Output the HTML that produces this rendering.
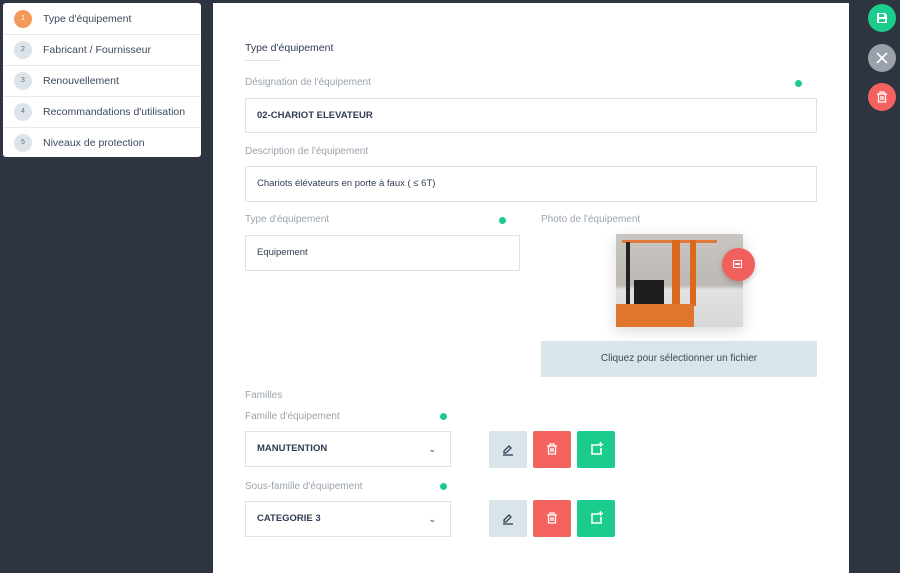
<!DOCTYPE html>
<html><head><meta charset="utf-8"><style>
body{margin:0;width:900px;height:569px;background:#2d3541;font-family:"Liberation Sans",sans-serif;position:relative;overflow:hidden}
.a{position:absolute}
.side{left:3px;top:3px;width:198px;height:154px;background:#fff;border-radius:3px}
.it{position:absolute;left:0;width:198px;height:31px;border-bottom:1px solid #e8ebee;font-size:10.5px;color:#3b4a5e}
.it span.n{position:absolute;left:11px;top:7px;width:18px;height:18px;border-radius:50%;background:#dde4e9;color:#5d6b7a;font-size:7px;text-align:center;line-height:18px}
.it span.t{position:absolute;left:40px;top:10px}
.main{left:213px;top:3px;width:636px;height:570px;background:#fff}
.lbl{font-size:10px;color:#9aa3ad}
.inp{border:1px solid #dde2e6;background:#fff;font-size:9.5px;color:#2f3d52;box-sizing:border-box;padding-left:11px}
.dot{width:7px;height:7px;border-radius:50%;background:#1ccc8d}
.btn{width:38px;height:37px;border-radius:2px}
.c{width:28px;height:28px;border-radius:50%;left:868px}
</style></head><body>
<div class="a side">
<div class="it" style="top:0"><span class="n" style="background:#f39a5a;color:#fff">1</span><span class="t">Type d'équipement</span></div>
<div class="it" style="top:31px"><span class="n">2</span><span class="t">Fabricant / Fournisseur</span></div>
<div class="it" style="top:62px"><span class="n">3</span><span class="t">Renouvellement</span></div>
<div class="it" style="top:93px"><span class="n">4</span><span class="t">Recommandations d'utilisation</span></div>
<div class="it" style="top:124px;border:none"><span class="n">5</span><span class="t">Niveaux de protection</span></div>
</div>
<div class="a main"></div>
<div class="a" style="left:245px;top:42px;font-size:10.5px;color:#2f3d52">Type d'équipement</div>
<div class="a" style="left:245px;top:60px;width:36px;height:1px;background:#dde2e6"></div>
<div class="a lbl" style="left:245px;top:77px">Désignation de l'équipement</div>
<div class="a dot" style="left:795px;top:80px"></div>
<div class="a inp" style="left:245px;top:98px;width:572px;height:35px;line-height:33px;font-weight:bold">02-CHARIOT ELEVATEUR</div>
<div class="a lbl" style="left:245px;top:146px">Description de l'équipement</div>
<div class="a inp" style="left:245px;top:166px;width:572px;height:36px;line-height:34px">Chariots élévateurs en porte à faux ( ≤ 6T)</div>
<div class="a lbl" style="left:245px;top:214px">Type d'équipement</div>
<div class="a dot" style="left:499px;top:217px"></div>
<div class="a inp" style="left:245px;top:235px;width:275px;height:36px;line-height:34px">Equipement</div>
<div class="a lbl" style="left:541px;top:214px">Photo de l'équipement</div>
<div class="a" style="left:616px;top:234px;width:127px;height:93px;background:linear-gradient(#c9c6c2 0,#bdb8b3 55%,#e2e2e2 60%,#d8d8d8 100%);box-shadow:0 4px 14px rgba(0,0,0,.15)">
<div class="a" style="left:6px;top:6px;width:95px;height:3px;background:#e07a3c"></div>
<div class="a" style="left:10px;top:8px;width:4px;height:62px;background:#222"></div>
<div class="a" style="left:56px;top:6px;width:8px;height:66px;background:#d8691f"></div>
<div class="a" style="left:74px;top:6px;width:6px;height:66px;background:#d8691f"></div>
<div class="a" style="left:18px;top:46px;width:30px;height:24px;background:#1e1e1e"></div>
<div class="a" style="left:0;top:70px;width:78px;height:23px;background:#e0762e"></div>
</div>
<div class="a" style="left:722px;top:248px;width:33px;height:33px;border-radius:50%;background:#f2605d;box-shadow:0 2px 6px rgba(0,0,0,.2)"><div class="a" style="left:11px;top:12px;width:9px;height:8px;border:1.5px solid #fff;box-sizing:border-box"></div><div class="a" style="left:13px;top:15px;width:5px;height:1.5px;background:#fff"></div></div>
<div class="a" style="left:541px;top:341px;width:276px;height:36px;background:#d9e5e8;font-size:10px;color:#3b4a5e;text-align:center;line-height:36px">Cliquez pour sélectionner un fichier</div>
<div class="a lbl" style="left:245px;top:390px">Familles</div>
<div class="a lbl" style="left:245px;top:411px">Famille d'équipement</div>
<div class="a dot" style="left:440px;top:413px"></div>
<div class="a inp" style="left:245px;top:431px;width:206px;height:36px;line-height:34px;font-weight:bold">MANUTENTION<span style="position:absolute;right:14px;font-weight:normal;font-size:9px">⌄</span></div>
<div class="a lbl" style="left:245px;top:481px">Sous-famille d'équipement</div>
<div class="a dot" style="left:440px;top:483px"></div>
<div class="a inp" style="left:245px;top:501px;width:206px;height:36px;line-height:34px;font-weight:bold">CATEGORIE 3<span style="position:absolute;right:14px;font-weight:normal;font-size:9px">⌄</span></div>
<div class="a btn" style="left:489px;top:431px;background:#dae5e9"><svg class="a" style="left:12px;top:11px" width="14" height="14" viewBox="0 0 14 14"><path d="M3 9L8 4l2 2-5 5H3z" fill="none" stroke="#2f3d52" stroke-width="1.3"/><path d="M2 13h10" stroke="#2f3d52" stroke-width="1.3"/></svg></div>
<div class="a btn" style="left:533px;top:431px;background:#f3625e"><svg class="a" style="left:13px;top:12px" width="12" height="12" viewBox="0 0 12 12"><path d="M1 3h10M4 3V1h4v2M2.5 3v8h7V3M5 5v4M7 5v4" fill="none" stroke="#fff" stroke-width="1.3"/></svg></div>
<div class="a btn" style="left:577px;top:431px;background:#1ccc8d"><svg class="a" style="left:13px;top:11px" width="13" height="13" viewBox="0 0 13 13"><path d="M8 3H2v9h9V6" fill="none" stroke="#fff" stroke-width="1.6"/><path d="M10.5 0v5M8 2.5h5" stroke="#fff" stroke-width="1.5"/></svg></div>
<div class="a btn" style="left:489px;top:500px;background:#dae5e9"><svg class="a" style="left:12px;top:11px" width="14" height="14" viewBox="0 0 14 14"><path d="M3 9L8 4l2 2-5 5H3z" fill="none" stroke="#2f3d52" stroke-width="1.3"/><path d="M2 13h10" stroke="#2f3d52" stroke-width="1.3"/></svg></div>
<div class="a btn" style="left:533px;top:500px;background:#f3625e"><svg class="a" style="left:13px;top:12px" width="12" height="12" viewBox="0 0 12 12"><path d="M1 3h10M4 3V1h4v2M2.5 3v8h7V3M5 5v4M7 5v4" fill="none" stroke="#fff" stroke-width="1.3"/></svg></div>
<div class="a btn" style="left:577px;top:500px;background:#1ccc8d"><svg class="a" style="left:13px;top:11px" width="13" height="13" viewBox="0 0 13 13"><path d="M8 3H2v9h9V6" fill="none" stroke="#fff" stroke-width="1.6"/><path d="M10.5 0v5M8 2.5h5" stroke="#fff" stroke-width="1.5"/></svg></div>
<div class="a c" style="top:4px;background:#1ccc8d"><svg class="a" style="left:8px;top:8px" width="12" height="12" viewBox="0 0 12 12"><path d="M1 1h8l2 2v8H1z" fill="#fff"/><rect x="3" y="2" width="5" height="3" fill="#1ccc8d"/><rect x="3" y="7" width="6" height="3" fill="#1ccc8d"/></svg></div>
<div class="a c" style="top:44px;background:#9aa1ab"><svg class="a" style="left:8px;top:8px" width="12" height="12" viewBox="0 0 12 12"><path d="M1 1l10 10M11 1L1 11" stroke="#fff" stroke-width="1.6"/></svg></div>
<div class="a c" style="top:83px;background:#f3625e"><svg class="a" style="left:8px;top:8px" width="12" height="12" viewBox="0 0 12 12"><path d="M1 3h10M4 3V1h4v2M2.5 3v8h7V3M5 5v4M7 5v4" fill="none" stroke="#fff" stroke-width="1.3"/></svg></div>
</body></html>
